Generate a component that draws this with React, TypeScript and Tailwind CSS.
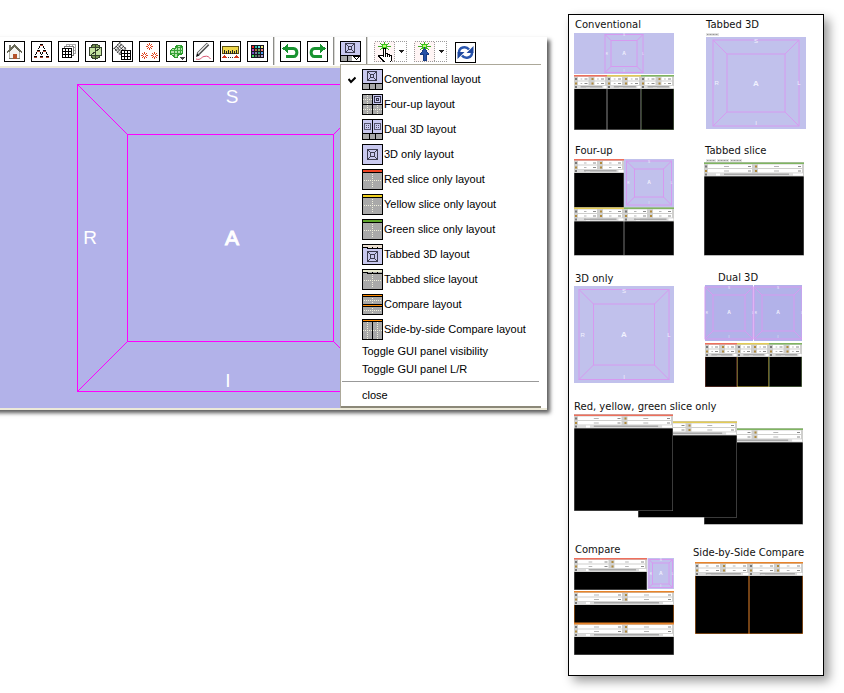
import * as React from "react";
import clsx from "clsx";

type LayoutKind =
  | "conventional"
  | "four-up"
  | "dual"
  | "3d"
  | "red"
  | "yellow"
  | "green"
  | "tabbed-3d"
  | "tabbed-slice"
  | "compare"
  | "side";

const MENU_ITEMS: { kind: LayoutKind; label: string }[] = [
  { kind: "conventional", label: "Conventional layout" },
  { kind: "four-up", label: "Four-up layout" },
  { kind: "dual", label: "Dual 3D layout" },
  { kind: "3d", label: "3D only layout" },
  { kind: "red", label: "Red slice only layout" },
  { kind: "yellow", label: "Yellow slice only layout" },
  { kind: "green", label: "Green slice only layout" },
  { kind: "tabbed-3d", label: "Tabbed 3D layout" },
  { kind: "tabbed-slice", label: "Tabbed slice layout" },
  { kind: "compare", label: "Compare layout" },
  { kind: "side", label: "Side-by-side Compare layout" },
];

const LILAC = "#c9c9ef";
const GRAY = "#a9a9a9";
const RED = "#ee6f5c";
const YELLOW = "#e3cb55";
const GREEN = "#7fb560";
const ORANGE = "#e8842a";

/* ---------- 21px icons ---------- */

function Glyph({ children }: { children: React.ReactNode }) {
  return (
    <svg
      viewBox="0 0 21 21"
      className="block h-[21px] w-[21px] shrink-0"
      shapeRendering="crispEdges"
      fill="none"
      aria-hidden="true"
    >
      {children}
    </svg>
  );
}

/** Pixel art: one character per pixel, looked up in `colors`. */
function Pixels({
  x,
  y,
  rows,
  colors,
}: {
  x: number;
  y: number;
  rows: string[];
  colors: Record<string, string>;
}) {
  return (
    <>
      {rows.flatMap((row, r) =>
        [...row].map((ch, c) =>
          colors[ch] ? (
            <rect key={`${r}-${c}`} x={x + c} y={y + r} width="1" height="1" fill={colors[ch]} />
          ) : null,
        ),
      )}
    </>
  );
}

function Frame() {
  return <rect x=".5" y=".5" width="20" height="20" stroke="#000" />;
}

function MiniCube({ x, y, s = 10 }: { x: number; y: number; s?: number }) {
  return (
    <g stroke="#3c3c50">
      <rect x={x + 0.5} y={y + 0.5} width={s - 1} height={s - 1} />
      <rect x={x + 3.5} y={y + 3.5} width={s - 7} height={s - 7} />
      <path
        d={`M${x + 1} ${y + 1}l3 3M${x + s - 1} ${y + 1}l-3 3M${x + 1} ${y + s - 1}l3-3M${x + s - 1} ${y + s - 1}l-3-3`}
      />
    </g>
  );
}

function Cross({ cx, cy, r, ry = r }: { cx: number; cy: number; r: number; ry?: number }) {
  return (
    <path
      d={`M${cx - r} ${cy + 0.5}h${2 * r + 1}M${cx + 0.5} ${cy - ry}v${2 * ry + 1}`}
      stroke="#efefdc"
      strokeDasharray="1 1"
    />
  );
}

function LayoutIcon({ kind, arrow = false }: { kind: LayoutKind; arrow?: boolean }) {
  if (kind === "conventional") {
    return (
      <Glyph>
        <path fill={LILAC} d="M0 0h21v14H0z" />
        <path fill={GRAY} d="M0 14h21v7H0z" />
        <MiniCube x={5} y={2} />
        <path stroke="#000" d="M0 14.5h21M7.5 14v7M13.5 14v7" />
        {arrow && (
          <>
            <path fill="#fff" d="M12 15h8v5h-8z" />
            <path stroke="#000" d="M13 15.5h7M14 16.5h1M18 16.5h1M15 17.5h1M17 17.5h1M16 18.5h1" />
          </>
        )}
        <Frame />
      </Glyph>
    );
  }
  if (kind === "four-up") {
    return (
      <Glyph>
        <path fill={GRAY} d="M0 0h21v21H0z" />
        <path fill={LILAC} d="M11 1h9v9h-9z" />
        <g stroke="#33334a">
          <rect x="12.5" y="2.5" width="6" height="6" />
          <path d="M14.5 4.5h2v2h-2z" />
        </g>
        <Cross cx={5} cy={5} r={4} />
        <Cross cx={5} cy={15} r={4} />
        <Cross cx={15} cy={15} r={4} />
        <path stroke="#000" d="M0 10.5h21M10.5 0v21" />
        <Frame />
      </Glyph>
    );
  }
  if (kind === "dual") {
    return (
      <Glyph>
        <path fill={LILAC} d="M0 0h21v14H0z" />
        <path fill={GRAY} d="M0 14h21v7H0z" />
        <g stroke="#55556c">
          <path d="M2.5 4.5h6v6h-6zM12.5 4.5h6v6h-6z" />
          <path d="M4 6.5h3M4 8.5h3M14 6.5h3M14 8.5h3" strokeDasharray="1 1" />
        </g>
        <path stroke="#000" d="M0 14.5h21M7.5 14v7M13.5 14v7M10.5 0v14" />
        <Frame />
      </Glyph>
    );
  }
  if (kind === "3d" || kind === "tabbed-3d") {
    const tabbed = kind === "tabbed-3d";
    return (
      <Glyph>
        <path fill={LILAC} d="M0 0h21v21H0z" />
        {tabbed && (
          <>
            <path fill="#ece0d2" d="M1 1h19v3H1z" />
            <path stroke="#000" d="M1 3.5h4M5.5 3v2M5 4.5h15M10.5 3v2M15.5 3v2" />
          </>
        )}
        <MiniCube x={5} y={tabbed ? 7 : 5} s={11} />
        <Frame />
      </Glyph>
    );
  }
  if (kind === "compare") {
    return (
      <Glyph>
        <path fill={GRAY} d="M0 0h21v21H0z" />
        <path fill="#ff8a00" d="M1 1h19v1H1zM1 11h19v1H1z" />
        <path stroke="#000" d="M0 2.5h21M0 10.5h21M0 12.5h21" />
        <Cross cx={10} cy={6} r={8} ry={2} />
        <Cross cx={10} cy={16} r={8} ry={2} />
        <Frame />
      </Glyph>
    );
  }
  if (kind === "side") {
    return (
      <Glyph>
        <path fill={GRAY} d="M0 0h21v21H0z" />
        <path fill="#ff8a00" d="M1 1h19v1H1z" />
        <Cross cx={5} cy={11} r={4} ry={8} />
        <Cross cx={15} cy={11} r={4} ry={8} />
        <path stroke="#000" d="M0 2.5h21M10.5 2v19" />
        <Frame />
      </Glyph>
    );
  }
  const bar = { red: "#ee4424", yellow: "#f0d020", green: "#5fa52c", "tabbed-slice": "#e6e8cf" }[kind];
  return (
    <Glyph>
      <path fill={GRAY} d="M0 0h21v21H0z" />
      <path fill={bar} d="M1 1h19v2H1z" />
      {kind === "tabbed-slice" ? (
        <path stroke="#000" d="M1 3.5h4M5.5 3v2M5 4.5h15M10.5 3v2M15.5 3v2" />
      ) : (
        <path stroke="#000" d="M0 3.5h21" />
      )}
      <Cross cx={10} cy={11} r={8} ry={6} />
      <Frame />
    </Glyph>
  );
}

const PALETTE = [
  ["#f02020", "#20c0a0", "#60e0e0", "#f0f080"],
  ["#c040c0", "#b07030", "#80a050", "#f08080"],
  ["#7050c0", "#8080a0", "#30a080", "#50a0f0"],
  ["#40e060", "#508060", "#707070", "#b0a0d0"],
];

const STAR = [
  "...#...",
  ".#.#.#.",
  "..#.#..",
  "##...##",
  "..#.#..",
  ".#.#.#.",
  "...#...",
];

const TREE = [
  "......kkk......",
  "......rrr......",
  ".....k...k.....",
  ".....k...k.....",
  "....k.....k....",
  "...............",
  "...kkk...kkk...",
  "...rrr...rrr...",
  "..k...k.k...k..",
  "..k...k.k...k..",
  ".k.....k.....k.",
  "...............",
  "kkk...kkk...kkk",
  "rrr...rrr...rrr",
];

const TOOLS: { label: string; art: React.ReactNode }[] = [
  {
    label: "Home",
    art: (
      <>
        <path fill="#77776a" d="M5 4h2v4H5z" />
        <path fill="#f4f4f0" stroke="#b5b5aa" d="M5.5 17.5v-7l5-5 5 5v7z" />
        <path stroke="#696958" strokeWidth="2" d="M3 11.5l7.5-7 7.5 7" />
        <path fill="#b4532a" d="M9 13h4v5H9z" />
        <path stroke="#77776a" d="M5 17.5h4M13 17.5h3" />
      </>
    ),
  },
  {
    label: "Data",
    art: <Pixels x={3} y={3} rows={TREE} colors={{ k: "#000", r: "#b0452f" }} />,
  },
  {
    label: "Volumes",
    art: (
      <>
        <path fill="#fff" stroke="#aaa" d="M8.5 3.5h9v9h-9zM8 6.5h10M8 9.5h10M11.5 3v10M14.5 3v10" />
        <path fill="#fff" stroke="#777" d="M6.5 5.5h9v9h-9z" />
        <path fill="#fff" stroke="#000" d="M4.5 7.5h9v9h-9zM4 10.5h10M4 13.5h10M7.5 7v10M10.5 7v10" />
      </>
    ),
  },
  {
    label: "Models",
    art: (
      <>
        <ellipse cx="10.5" cy="10.5" rx="6" ry="7.5" fill="#789552" stroke="#33402a" />
        <path fill="#c4e2a1" d="M5 7h11v7H5z" />
        <path stroke="#33402a" d="M4 6.5h13M4 14.5h13M4.5 7v7M16.5 7v7M10.5 3v15M6 14l9-7" />
      </>
    ),
  },
  {
    label: "Transforms",
    art: (
      <>
        <g stroke="#222" shapeRendering="auto" transform="rotate(45 8 8)">
          <path strokeDasharray="1 .7" d="M3 4h10M3 6.5h10M3 9h10M3 11.500h10" />
          <path strokeDasharray="1 .7" d="M3.500 3v10M6 3v10M8.500 3v10M11 3v10" />
        </g>
        <path fill="#fff" stroke="#000" d="M9.5 9.5h9v9h-9zM9 12.5h10M9 15.5h10M12.5 9v10M15.5 9v10" />
      </>
    ),
  },
  {
    label: "Fiducials",
    art: (
      <>
        <Pixels x={7} y={2} rows={STAR} colors={{ "#": "#df4620" }} />
        <Pixels x={2} y={11} rows={STAR} colors={{ "#": "#df4620" }} />
        <Pixels x={12} y={11} rows={STAR} colors={{ "#": "#df4620" }} />
      </>
    ),
  },
  {
    label: "Editor",
    art: (
      <>
        <path
          fill="#b6e6ac"
          stroke="#289b28"
          d="M9.500 5.500l2-1h4l1 2v6l-2 1h-2l-1 3h-3l-1-2-3-1v-4l2-2h3z"
        />
        <path stroke="#38a338" d="M5 9.500h12M5 12.500h10M8.500 7v9M11.500 4v12M14.500 4v9M9 6.500h8" />
        <path fill="#444" d="M14 16h5l-2 3h-1z" />
      </>
    ),
  },
  {
    label: "Measure path",
    art: (
      <g shapeRendering="auto">
        <path stroke="#4a4a4a" strokeWidth="3.500" d="M5 13L15 3" />
        <path stroke="#f0f0f0" strokeWidth="1.500" d="M5 12.500L14.500 3" />
        <path fill="#111" d="M3 16l1-4 2.500 2.500z" />
        <path stroke="#d95470" d="M3 18c5 1.500 5-2 8-2.500 4-1 5 .500 6.500 2.500" />
      </g>
    ),
  },
  {
    label: "Measurements",
    art: (
      <>
        <path fill="#f0d84a" stroke="#5e5110" d="M2.5 5.5h16v7h-16z" />
        <path stroke="#222" d="M4.5 9v4M6.5 10v3M8.5 9v4M10.5 10v3M12.5 9v4M14.5 10v3M16.5 9v4" />
        <path fill="#d4381c" d="M2 17l2-3h1l2 3zM14 17l2-3h1l2 3z" />
        <path stroke="#333" strokeDasharray="1 1" d="M8 16.5h5" />
      </>
    ),
  },
  {
    label: "Colors",
    art: (
      <>
        <path fill="#151520" d="M4 4h13v13H4z" />
        {PALETTE.map((row, r) =>
          row.map((c, i) => <rect key={c} x={5 + i * 3} y={5 + r * 3} width="2" height="2" fill={c} />),
        )}
      </>
    ),
  },
];

const undoArt = (
  <>
    <path
      stroke="#189330"
      strokeWidth="3"
      shapeRendering="auto"
      d="M6 7.5h7.500c4.500 0 4.500 8 0 8H6"
    />
    <path fill="#189330" d="M2 7.500L8 3v9z" />
  </>
);

function ToolButton({ label, children }: { label: string; children: React.ReactNode }) {
  return (
    <button type="button" aria-label={label} className="shrink-0 bg-white">
      <Glyph>
        {children}
        <Frame />
      </Glyph>
    </button>
  );
}

function Separator() {
  return <span className="h-7 w-0.5 shrink-0 self-start border-l border-[#8c8c88] bg-[#d8d8d4]" />;
}

function GreenSpark() {
  return (
    <>
      <path stroke="#3fae24" d="M10.5 1v9M4 5.5h13M6 2l9 7M15 2L6 9" />
      <rect x="8" y="3" width="5" height="5" fill="#38c31a" />
      <rect x="9" y="4" width="3" height="2" fill="#b8ff70" />
    </>
  );
}

function ModeButton({ label, children }: { label: string; children: React.ReactNode }) {
  return (
    <button type="button" aria-label={label} className="flex shrink-0">
      <span className="bg-[#fff5f5]">
        <Glyph>
          <rect x=".5" y=".5" width="20" height="20" stroke="#9a9a9a" strokeDasharray="1 1" />
          {children}
        </Glyph>
      </span>
      <svg viewBox="0 0 12 21" className="block h-[21px] w-3" shapeRendering="crispEdges" fill="none" aria-hidden="true">
        <path stroke="#9a9a9a" strokeDasharray="1 1" d="M1 .5h11M1 20.5h11M11.5 0v21" />
        <path fill="#222" d="M4 9h5v1H4zM5 10h3v1H5zM6 11h1v1H6z" />
      </svg>
    </button>
  );
}

/* ---------- layout menu ---------- */

function LayoutMenu() {
  return (
    <div
      role="menu"
      aria-label="Layouts"
      className="absolute left-0 top-[23px] z-10 w-[207px] border-l border-[#aca899] bg-white pr-1.5"
    >
      <div className="border-b-2 border-t border-t-[#aca899] border-b-[#8b8878] pb-0.5 pt-0.5">
        {MENU_ITEMS.map((item, i) => (
          <button
            key={item.kind}
            type="button"
            role="menuitemradio"
            aria-checked={i === 0}
            className={clsx("flex h-[25px] w-full items-center", i === 0 ? "pl-[7px]" : "pl-[21px]")}
          >
            {i === 0 && (
              <svg viewBox="0 0 8 8" className="mr-1.5 h-2 w-2" fill="none" aria-hidden="true">
                <path d="M0.5 3L3 6L7.5 1.500" stroke="#000" strokeWidth="2" />
              </svg>
            )}
            <LayoutIcon kind={item.kind} />
            <span className="ml-px whitespace-nowrap">{item.label}</span>
          </button>
        ))}
        <button type="button" role="menuitem" className="block h-[18px] pl-[21px] text-left">
          Toggle GUI panel visibility
        </button>
        <button type="button" role="menuitem" className="block h-[18px] pl-[21px] text-left">
          Toggle GUI panel L/R
        </button>
        <hr className="ml-px mr-0.5 mt-[3px] border-t border-[#999]" />
        <button type="button" role="menuitem" className="mt-1 block h-[18px] pl-[21px] text-left">
          close
        </button>
      </div>
    </div>
  );
}

function Toolbar() {
  return (
    <div className="flex h-[29px] items-start pl-1 pt-1" role="toolbar" aria-label="Modules">
      <div className="flex gap-1.5">
        {TOOLS.map((t) => (
          <ToolButton key={t.label} label={t.label}>
            {t.art}
          </ToolButton>
        ))}
      </div>
      <div className="-mt-1 ml-[5px] flex">
        <Separator />
      </div>
      <div className="ml-[5px] flex gap-1.5">
        <ToolButton label="Undo">{undoArt}</ToolButton>
        <ToolButton label="Redo">
          <g transform="translate(21 0) scale(-1 1)">{undoArt}</g>
        </ToolButton>
      </div>
      <div className="-mt-1 ml-[5px] flex">
        <Separator />
      </div>
      <div className="relative ml-[5px]">
        <button type="button" aria-label="Choose layout" aria-haspopup="menu" aria-expanded className="block">
          <LayoutIcon kind="conventional" arrow />
        </button>
        <LayoutMenu />
      </div>
      <div className="-mt-1 ml-[5px] flex">
        <Separator />
      </div>
      <div className="ml-[6px] flex gap-[7px]">
        <ModeButton label="Pick mode">
          <GreenSpark />
          <path
            fill="#fff"
            stroke="#000"
            d="M9.500 15V7.500h2V12h2v1h2v1h2v5l-1 2h-6l-3-3-3-3v-1h2z"
          />
          <path stroke="#000" d="M11.5 12v4M13.5 13v3M15.5 14v2" />
        </ModeButton>
        <ModeButton label="Place mode">
          <GreenSpark />
          <path fill="#264fa6" stroke="#183a80" d="M10.500 7l4 6h-2.500v6h-3v-6H6.500z" />
        </ModeButton>
      </div>
      <div className="ml-[8px] mt-px">
        <ToolButton label="Refresh views">
          <g shapeRendering="auto">
            <path stroke="#2a56ae" strokeWidth="2.500" d="M4 10.500C4 5 11 3.500 14 7.500M17 10.500c0 5.500-7 7-10 3" />
            <path fill="#1f489f" d="M18.500 4v7h-7zM2.500 17v-7h7z" />
          </g>
        </ToolButton>
      </div>
    </div>
  );
}

function Viewer() {
  return (
    <div className="-ml-2 border-y-2 border-[#ece9d8] bg-[#b2b2e9] pl-2">
      <svg className="block h-[340px] w-full" role="img" aria-label="3D view">
        <g fill="none" stroke="#ff00ff" shapeRendering="crispEdges">
          <rect x="77.5" y="16.5" width="306" height="307" />
          <rect x="127.5" y="66.5" width="206" height="207" />
          <path d="M78 17l50 50M383 17l-50 50M78 323l50-50M383 323l-50-50" />
        </g>
        <g fill="#fff" fontSize="19" textAnchor="middle" fontFamily="Liberation Sans, Arial, sans-serif">
          <text x="232" y="35">S</text>
          <text x="90" y="176">R</text>
          <text x="232" y="177" fontSize="21" stroke="#fff" strokeWidth="1">A</text>
          <text x="228" y="319">I</text>
        </g>
      </svg>
    </div>
  );
}

/* ---------- thumbnails ---------- */

type Box = { x: number; y: number; w: number; h: number };

function Slice({ x, y, w, h, color, edge = "#777" }: Box & { color: string; edge?: string }) {
  const half = w / 2;
  return (
    <g>
      <rect x={x} y={y} width={w} height={h} fill={edge} />
      <rect x={x} y={y} width={w} height="14" fill="#cfcfcd" />
      <rect x={x} y={y} width={w} height="1.5" fill={color} />
      {[0, half].map((dx) =>
        [2, 6.5].map((dy) => (
          <g key={`${dx}-${dy}`}>
            <rect x={x + dx + 4} y={y + dy} width={half - 6} height="3.5" fill="#fff" />
            <rect x={x + dx + 1} y={y + dy + 1} width="2" height="2" fill={dx || dy > 2 ? "#b08a3c" : "#777"} />
            <rect x={x + dx + half * 0.4} y={y + dy + 1.5} width={half * 0.1} height="1" fill="#b5b5b5" />
            <rect x={x + dx + half - 6} y={y + dy + 1.5} width="3" height="1" fill="#8c8c8c" />
          </g>
        )),
      )}
      <rect x={x + 1} y={y + 10.5} width={w - 2} height="3" fill="#dcdcdc" />
      <rect x={x + 1} y={y + 11} width="2" height="2" fill="#777" />
      <rect x={x + 12} y={y + 11} width="4" height="2" fill="#fff" />
      <rect x={x + w * 0.2} y={y + 11} width={w * 0.65} height="1.5" fill="#a8a8a8" />
      <rect x={x + w * 0.89} y={y + 11} width={w * 0.1} height="2" fill="#fff" />
      <rect x={x + 0.5} y={y + 14} width={w - 1} height={h - 14.5} fill="#000" />
    </g>
  );
}

function Cube({
  x,
  y,
  w,
  h,
  padX,
  padY,
  depth,
  fill = "#c1c1ec",
  font = 6,
}: Box & { padX: number; padY: number; depth: number; fill?: string; font?: number }) {
  const l = x + padX;
  const r = x + w - padX;
  const t = y + padY;
  const b = y + h - padY;
  const cx = x + w / 2;
  const cy = y + h / 2;
  return (
    <g>
      <rect x={x} y={y} width={w} height={h} fill={fill} />
      <g fill="none" stroke="#d69af0">
        <rect x={l} y={t} width={r - l} height={b - t} />
        <rect x={l + depth} y={t + depth} width={r - l - 2 * depth} height={b - t - 2 * depth} />
        <path
          d={`M${l} ${t}l${depth} ${depth}M${r} ${t}l${-depth} ${depth}M${l} ${b}l${depth} ${-depth}M${r} ${b}l${-depth} ${-depth}`}
        />
      </g>
      <g fill="#f2f2ff" fontSize={font} textAnchor="middle" fontFamily="Liberation Sans, Arial, sans-serif">
        <text x={cx} y={t + font * 0.5}>S</text>
        <text x={l + font * 0.6} y={cy + font * 0.35}>R</text>
        <text x={r} y={cy + font * 0.35}>L</text>
        <text x={cx} y={b - 1}>I</text>
        <text x={cx} y={cy + font * 0.45} fontSize={font + 2} fontWeight="bold">A</text>
      </g>
    </g>
  );
}

function TabMarks({ widths }: { widths: number[] }) {
  return (
    <g>
      {widths.map((w, i) => {
        const x = 2 + widths.slice(0, i).reduce((a, b) => a + b + 1, 0);
        return (
          <g key={i}>
            <rect x={x} y="1" width={w} height="3" fill="#e2e2e2" />
            <path d={`M${x + 1} 2.5h${w - 2}`} stroke="#999" strokeDasharray="1 .5" />
          </g>
        );
      })}
    </g>
  );
}

function Thumb({
  title,
  className,
  captionClass,
  width,
  height,
  children,
}: {
  title: string;
  className?: string;
  captionClass?: string;
  width: number;
  height: number;
  children: React.ReactNode;
}) {
  return (
    <figure className={className}>
      <figcaption className={clsx("whitespace-nowrap", captionClass ?? "h-4 pl-px leading-[18px]")}>{title}</figcaption>
      <svg width={width} height={height} className="block" role="img" aria-label={`${title} layout preview`}>
        {children}
      </svg>
    </figure>
  );
}

function LayoutGallery() {
  return (
    <aside className="mr-5 mt-3.5 w-64 shrink-0 border border-black bg-white pb-5 pl-[5px] pr-1 pt-px font-['DejaVu_Sans',Verdana,sans-serif] text-[10px] text-[#111] shadow-[5px_5px_10px_rgba(0,0,0,0.4)]">
      <div className="grid grid-cols-2 gap-x-[15px]">
        <Thumb title="Conventional" width={100} height={98} className="mb-3">
          <Cube x={0} y={1} w={100} h={41} padX={31} padY={1.5} depth={6} font={3} />
          <Slice x={0} y={43} w={33} h={55} color={RED} edge="#888" />
          <Slice x={33} y={43} w={34} h={55} color={YELLOW} edge="#888" />
          <Slice x={67} y={43} w={33} h={55} color={GREEN} edge="#6f8560" />
        </Thumb>
        <Thumb title="Tabbed 3D" width={102} height={98} className="mb-3" captionClass="h-4 pl-0.5 leading-[18px]">
          <TabMarks widths={[13]} />
          <Cube x={2} y={5} w={100} h={92} padX={7} padY={3} depth={14} />
        </Thumb>
        <Thumb title="Four-up" width={100} height={98} className="mb-3.5">
          <Slice x={0} y={1} w={50} h={49} color={RED} />
          <Cube x={50} y={1} w={50} h={48} padX={2.5} padY={2} depth={8} font={3} />
          <Slice x={0} y={49.5} w={50} h={48} color={YELLOW} />
          <Slice x={50} y={49.5} w={50} h={48} color={GREEN} />
        </Thumb>
        <Thumb title="Tabbed slice" width={100} height={98} className="mb-3.5">
          <TabMarks widths={[10, 12, 12]} />
          <Slice x={0} y={4.5} w={100} h={93} color={GREEN} />
        </Thumb>
        <Thumb title="3D only" width={100} height={98}>
          <Cube x={0} y={0} w={100} h={97} padX={5} padY={3.5} depth={14.5} />
        </Thumb>
        <Thumb
          title="Dual 3D"
          width={98}
          height={103}
          className="mb-[11px]"
          captionClass="h-3.5 pl-3.5 leading-4"
        >
          <Cube x={1} y={1} w={48} h={56} padX={0} padY={2} depth={8} font={3} fill="#b2b2e9" />
          <Cube x={50} y={1} w={48} h={56} padX={0} padY={2} depth={8} font={3} fill="#b2b2e9" />
          <Slice x={1} y={59} w={32} h={44} color={RED} edge="#8a4a3c" />
          <Slice x={33} y={59} w={32} h={44} color={YELLOW} edge="#d8c450" />
          <Slice x={65} y={59} w={33} h={44} color={GREEN} edge="#7f9a68" />
        </Thumb>
      </div>
      <Thumb
        title="Red, yellow, green slice only"
        width={230}
        height={112}
        className="mb-[15px]"
        captionClass="h-4 leading-[18px]"
      >
        <Slice x={130} y={14.5} w={99} h={96} color={GREEN} />
        <Slice x={64} y={7.5} w={99} h={96} color={YELLOW} />
        <Slice x={0} y={0.5} w={99} h={96.5} color={RED} />
      </Thumb>
      <div className="flex gap-[19px]">
        <Thumb title="Compare" width={100} height={98}>
          <Slice x={0} y={1} w={73} h={32} color={RED} />
          <Cube x={73.5} y={1} w={26.5} h={31} padX={1.5} padY={1.5} depth={3.5} font={3} />
          <Slice x={0} y={34} w={100} h={32} color={ORANGE} edge={ORANGE} />
          <Slice x={0} y={66} w={100} h={32} color={ORANGE} />
        </Thumb>
        <Thumb
          title="Side-by-Side Compare"
          width={112}
          height={75}
          className="mt-[3px]"
          captionClass="h-4 leading-[18px]"
        >
          <Slice x={2} y={2} w={54} h={72} color={ORANGE} edge={ORANGE} />
          <Slice x={56} y={2} w={54} h={72} color={ORANGE} edge={ORANGE} />
        </Thumb>
      </div>
    </aside>
  );
}

export default function App() {
  return (
    <div className="flex min-h-screen items-start overflow-hidden bg-white">
      <main className="-ml-2 mr-[21px] mt-[37px] min-w-0 flex-1 bg-white pl-2 font-['Liberation_Sans',Arial,sans-serif] text-[11px] text-black shadow-[3px_3px_4px_rgba(0,0,0,0.65)]">
        <Toolbar />
        <Viewer />
      </main>
      <LayoutGallery />
    </div>
  );
}
